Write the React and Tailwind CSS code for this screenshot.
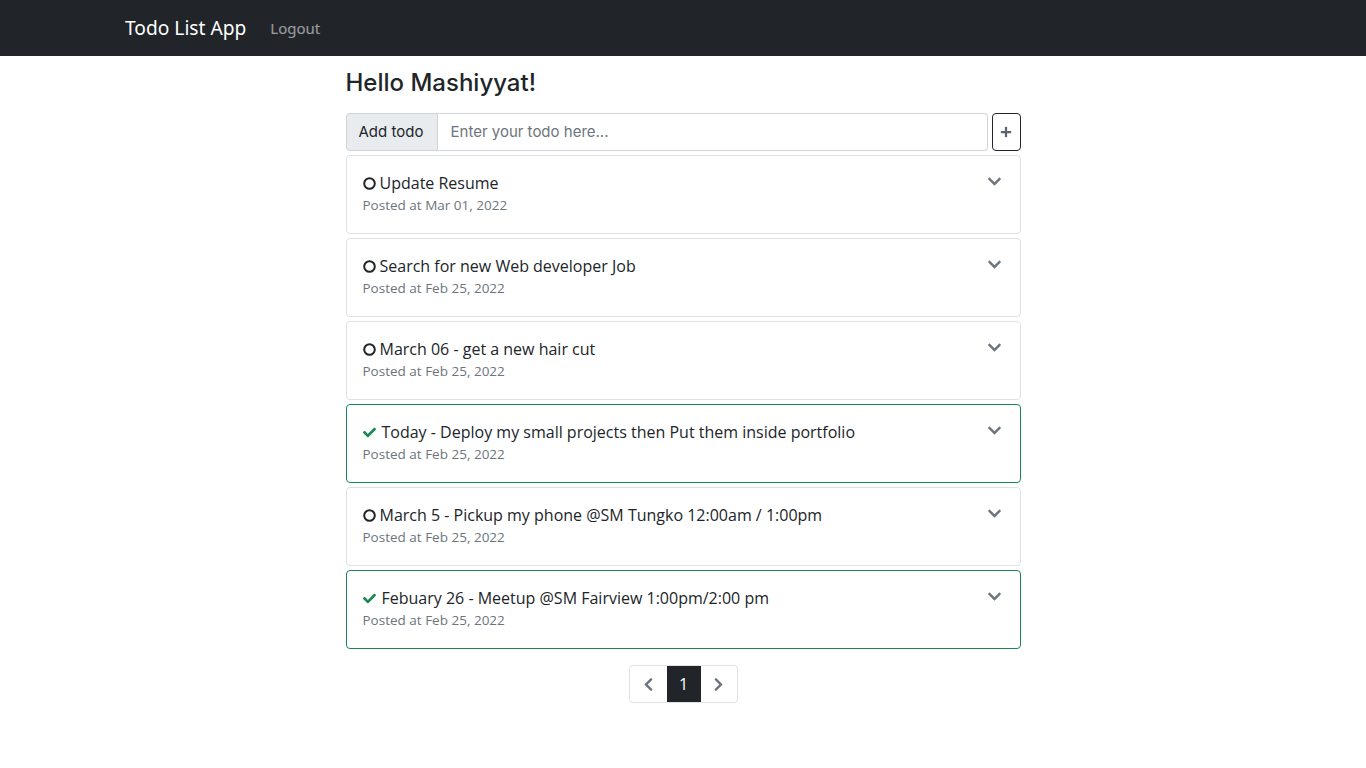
import React from "react";
import { FaCheck, FaChevronDown, FaChevronLeft, FaChevronRight, FaPlus } from "react-icons/fa";

const todos = [
  { title: "Update Resume", date: "Mar 01, 2022", done: false },
  { title: "Search for new Web developer Job", date: "Feb 25, 2022", done: false },
  { title: "March 06 - get a new hair cut", date: "Feb 25, 2022", done: false },
  { title: "Today - Deploy my small projects then Put them inside portfolio", date: "Feb 25, 2022", done: true },
  { title: "March 5 - Pickup my phone @SM Tungko 12:00am / 1:00pm", date: "Feb 25, 2022", done: false },
  { title: "Febuary 26 - Meetup @SM Fairview 1:00pm/2:00 pm", date: "Feb 25, 2022", done: true },
];

const Circle = () => (
  <svg width="13" height="13" viewBox="0 0 13 13" className="shrink-0">
    <circle cx="6.5" cy="6.5" r="5.3" fill="none" stroke="#212529" strokeWidth="2" />
  </svg>
);

export default function App() {
  return (
    <div className="min-h-screen bg-white text-[#212529] font-['Open_Sans',sans-serif]">
      {/* NAVBAR */}
      <nav className="h-14 bg-[#212529] flex items-center">
        <div className="w-[1140px] mx-auto px-3 flex items-center">
          <span className="text-white text-[19.2px] mr-6 font-['Noto_Sans',sans-serif]">Todo List App</span>
          <span className="text-white/55 text-[15px] font-['Noto_Sans',sans-serif]">Logout</span>
        </div>
      </nav>

      <div className="w-[675px] mx-auto">
        {/* HEADING */}
        <h1 className="text-[24px] font-medium mt-[11px] mb-[14px] leading-[32px] font-['Inter',sans-serif]">
          Hello Mashiyyat!
        </h1>

        {/* ADD TODO */}
        <div className="flex h-[38px] mb-1">
          <span className="shrink-0 whitespace-nowrap bg-[#e9ecef] border border-[#ced4da] rounded-l-[4px] pl-[12px] flex items-center text-[15px] w-[92px] font-['Inter',sans-serif]">
            Add todo
          </span>
          <input
            className="flex-1 min-w-0 border border-l-0 border-[#ced4da] rounded-r-[4px] px-[13px] text-[15px] outline-none placeholder:text-[#6c757d] font-['Inter',sans-serif]"
            placeholder="Enter your todo here..."
          />
          <button className="ml-1 w-[29px] shrink-0 border border-[#212529] rounded-[4px] flex items-center justify-center text-[#5c636a]">
            <FaPlus size={12} />
          </button>
        </div>

        {/* TODO LIST */}
        <div className="flex flex-col gap-[4px]">
          {todos.map((t, i) => (
            <div
              key={i}
              className={`h-[79px] rounded-[4px] border px-4 pt-[16px] flex justify-between ${
                t.done ? "border-[#198754]" : "border-[#dee2e6]"
              }`}
            >
              <div>
                <p className="flex items-center gap-[4px] text-[16px] leading-[22px]">
                  {t.done ? (
                    <FaCheck size={13} className="text-[#198754] mr-[2px]" />
                  ) : (
                    <Circle />
                  )}
                  {t.title}
                </p>
                <p className="text-[13.5px] text-[#6c757d] leading-[20px] mt-[1px]">Posted at {t.date}</p>
              </div>
              <FaChevronDown size={15} className="text-[#6c757d] mt-[2px] mr-[2px]" />
            </div>
          ))}
        </div>

        {/* PAGINATION */}
        <div className="flex justify-center mt-4">
          <div className="flex h-[38px] border border-[#dee2e6] rounded-[4px] overflow-hidden">
            <span className="w-[37px] flex items-center justify-center text-[#6c757d]">
              <FaChevronLeft size={15} />
            </span>
            <span className="w-[34px] flex items-center justify-center bg-[#212529] text-white text-[16px]">1</span>
            <span className="w-[36px] flex items-center justify-center text-[#6c757d]">
              <FaChevronRight size={15} />
            </span>
          </div>
        </div>
      </div>
    </div>
  );
}
